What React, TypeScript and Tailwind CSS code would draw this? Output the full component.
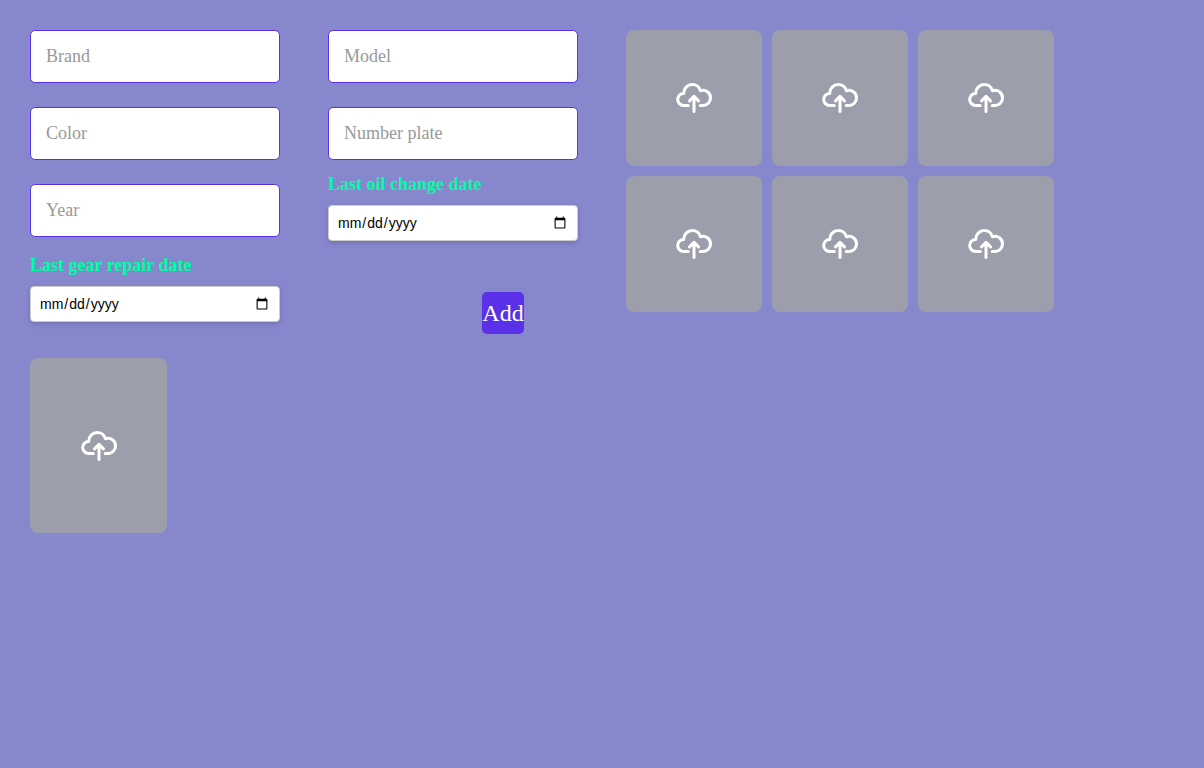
import React from "react";

function UploadIcon() {
  return (
    <svg width="36" height="30" viewBox="0 0 36 30" fill="none" stroke="white" strokeWidth="3" strokeLinecap="round" strokeLinejoin="round" className="overflow-visible">
      <path d="M12.3 22.5H7.6A6.05 6.05 0 0 1 7.8 10.4A8.6 8.6 0 0 1 16.3 1.5A8.5 8.5 0 0 1 24.5 7.8A7.4 7.4 0 0 1 34.5 15A7.4 7.4 0 0 1 27.1 22.5H24.2" />
      <path d="M13.5 17.9L18 13.4L22.5 17.9M18 14V28.5" />
    </svg>
  );
}

function TextField({ placeholder }: { placeholder: string }) {
  return (
    <input
      placeholder={placeholder}
      className="block h-[53px] w-[250px] rounded-[5px] border border-[#5a31e8] bg-white px-[15px] text-[18px] text-black outline-none placeholder:text-[#999]"
    />
  );
}

function DateField({ label }: { label: string }) {
  return (
    <label className="block w-[250px]">
      <span className="block h-[21px] text-[18px] leading-[21px] font-bold text-[#00ffa2]">{label}</span>
      <input
        type="date"
        className="mt-[10px] block h-9 w-[250px] rounded-[4px] border border-[#ccc] bg-white px-2 font-['Liberation_Sans',sans-serif] text-[14px] text-black shadow-[0_2px_5px_rgba(0,0,0,0.15)] outline-none"
      />
    </label>
  );
}

function UploadTile({ className }: { className: string }) {
  return (
    <button className={`flex items-center justify-center rounded-[8px] bg-[#9d9eab] ${className}`}>
      <UploadIcon />
    </button>
  );
}

export default function App() {
  return (
    <main className="min-h-screen bg-[#8787cd] p-[30px] font-['Liberation_Serif',serif]">
      <div className="flex items-start gap-12">
        <div className="flex w-[250px] flex-col">
          <div className="flex flex-col gap-6">
            <TextField placeholder="Brand" />
            <TextField placeholder="Color" />
            <TextField placeholder="Year" />
          </div>
          <div className="mt-[18px]">
            <DateField label="Last gear repair date" />
          </div>
          <UploadTile className="mt-9 h-[175px] w-[137px]" />
        </div>
        <div className="flex w-[250px] flex-col">
          <div className="flex flex-col gap-6">
            <TextField placeholder="Model" />
            <TextField placeholder="Number plate" />
          </div>
          <div className="mt-[14px]">
            <DateField label="Last oil change date" />
          </div>
          <button className="mt-[51px] ml-[154px] h-[42px] w-[42px] rounded-[5px] bg-[#5a31e8] text-[24px] text-white">Add</button>
        </div>
        <div className="grid grid-cols-[repeat(3,136px)] gap-[10px]">
          {[0, 1, 2, 3, 4, 5].map((i) => (
            <UploadTile key={i} className="h-[136px] w-[136px]" />
          ))}
        </div>
      </div>
    </main>
  );
}
